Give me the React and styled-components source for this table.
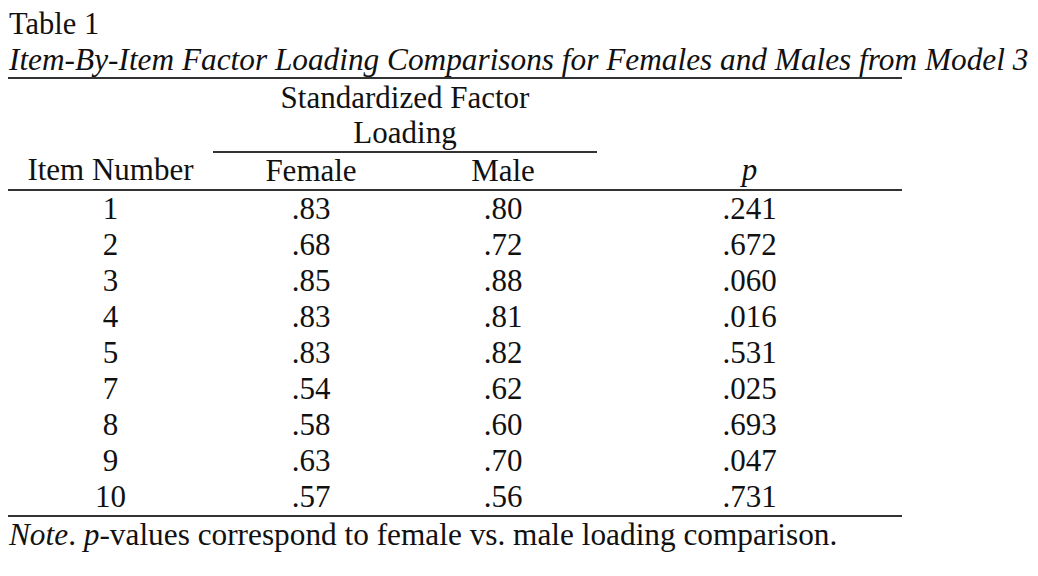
import React from "react";
import styled, { createGlobalStyle } from "styled-components";

const GlobalStyle = createGlobalStyle`
  html, body {
    margin: 0;
    padding: 0;
    background: #ffffff;
  }
  body {
    font-family: "Liberation Serif", "Times New Roman", serif;
    color: #111;
  }
`;

const Page = styled.main`
  padding: 6px 0 0 8px;
  font-size: 31px;
  line-height: 36px;
  white-space: nowrap;
`;

const Label = styled.div`
  font-size: 30.5px;
  padding-left: 1px;
`;

const Caption = styled.div`
  font-style: italic;
  font-size: 31.3px;
  line-height: 35px;
  padding-left: 1px;
`;

const Table = styled.table`
  border-collapse: collapse;
  table-layout: fixed;
  width: 894px;
  border-top: 2px solid #333;
  border-bottom: 2px solid #333;
`;

const Cell = styled.td`
  padding: 0;
  text-align: center;
  vertical-align: top;
  line-height: ${(p) => (p.$group ? "35px" : "36px")};
  padding-top: ${(p) => (p.$group ? "1px" : "0")};
  padding-bottom: ${(p) => (p.$group ? "1px" : "0")};
  border-bottom: ${(p) => (p.$rule ? "2px solid #333" : "none")};
  font-style: ${(p) => (p.$italic ? "italic" : "normal")};
`;

const HeadRow = styled.tr`
  border-bottom: 2px solid #333;
`;

const Note = styled.div`
  font-size: 31.3px;
  padding-left: 1px;
  em {
    font-style: italic;
  }
`;

const rows = [
  ["1", ".83", ".80", ".241"],
  ["2", ".68", ".72", ".672"],
  ["3", ".85", ".88", ".060"],
  ["4", ".83", ".81", ".016"],
  ["5", ".83", ".82", ".531"],
  ["7", ".54", ".62", ".025"],
  ["8", ".58", ".60", ".693"],
  ["9", ".63", ".70", ".047"],
  ["10", ".57", ".56", ".731"],
];

export default function App() {
  return (
    <>
      <GlobalStyle />
      <Page>
        <Label>Table 1</Label>
        <Caption>
          Item-By-Item Factor Loading Comparisons for Females and Males from Model 3
        </Caption>
        <Table>
          <colgroup>
            <col style={{ width: 205 }} />
            <col style={{ width: 196 }} />
            <col style={{ width: 188 }} />
            <col style={{ width: 305 }} />
          </colgroup>
          <thead>
            <tr>
              <Cell />
              <Cell colSpan={2} $group $rule>
                Standardized Factor
                <br />
                Loading
              </Cell>
              <Cell />
            </tr>
            <HeadRow>
              <Cell>Item Number</Cell>
              <Cell>Female</Cell>
              <Cell>Male</Cell>
              <Cell $italic>p</Cell>
            </HeadRow>
          </thead>
          <tbody>
            {rows.map((r) => (
              <tr key={r[0]}>
                {r.map((v, i) => (
                  <Cell key={i}>{v}</Cell>
                ))}
              </tr>
            ))}
          </tbody>
        </Table>
        <Note>
          <em>Note</em>. <em>p</em>-values correspond to female vs. male loading comparison.
        </Note>
      </Page>
    </>
  );
}
